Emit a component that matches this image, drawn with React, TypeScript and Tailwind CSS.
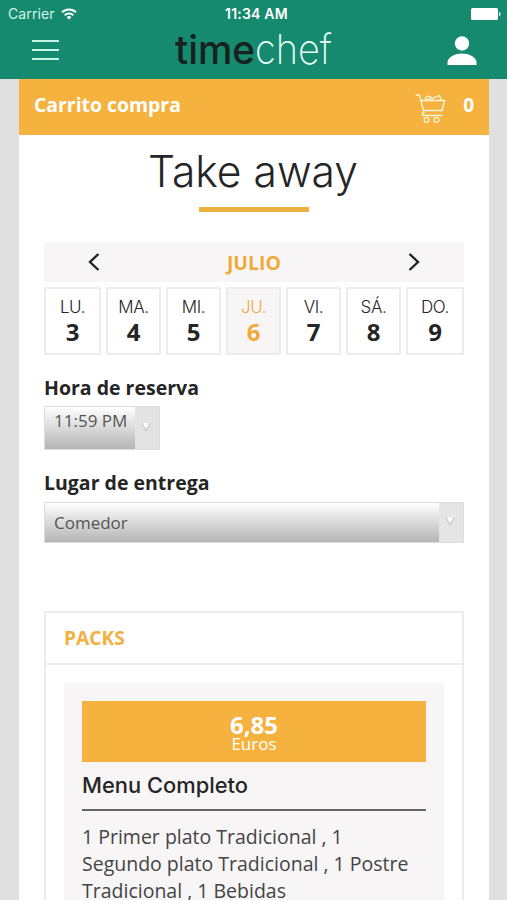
import clsx from "clsx";

const days = [
  { name: "LU.", date: 3 },
  { name: "MA.", date: 4 },
  { name: "MI.", date: 5 },
  { name: "JU.", date: 6, active: true },
  { name: "VI.", date: 7 },
  { name: "SÁ.", date: 8 },
  { name: "DO.", date: 9 },
];

function StatusBar() {
  return (
    <div className="grid h-[27px] grid-cols-3 items-center pl-2 pr-[6px] font-['Inter',sans-serif] text-[14px] leading-none text-white">
      <div className="flex items-center gap-[6px] text-[#d5f3e8]">
        <span className="tracking-[0.1px]">Carrier</span>
        <svg width="16" height="12" viewBox="0 0 16 12" fill="none" stroke="white" strokeWidth="2">
          <path d="M1 4.3a10 10 0 0 1 14 0" />
          <path d="M3.7 7.2a6.2 6.2 0 0 1 8.6 0" />
          <path d="M8 11.6 5.6 9.2a3.4 3.4 0 0 1 4.8 0z" fill="white" stroke="none" />
        </svg>
      </div>
      <span className="whitespace-nowrap pl-[4px] text-center text-[14px] font-semibold tracking-[0.2px]">11:34 AM</span>
      <svg className="justify-self-end" width="30" height="12" viewBox="0 0 30 12" fill="white">
        <rect width="27" height="12" rx="1.5" />
        <path d="M28 4c2 .6 2 3.400 0 4z" />
      </svg>
    </div>
  );
}

function Header() {
  return (
    <header className="h-[79px] bg-[#158a6e]">
      <StatusBar />
      <div className="flex h-[52px] items-start justify-between pl-8 pr-[30px]">
        <button className="mt-[13px] flex w-[27px] flex-col gap-[7px]" aria-label="Menu">
          <span className="h-[2px] bg-[#c8f5e6]" />
          <span className="h-[2px] bg-[#c8f5e6]" />
          <span className="h-[2px] bg-[#c8f5e6]" />
        </button>
        <svg className="ml-[4px]" width="160" height="52" viewBox="0 0 160 52" fontFamily="Inter, sans-serif" fontSize="39">
          <text x="0" y="37" fill="#17211f" fontWeight="500" textLength="80" lengthAdjust="spacingAndGlyphs">time</text>
          <text x="80" y="37" fill="#e9fff8" fontWeight="200" fontSize="41" textLength="77" lengthAdjust="spacingAndGlyphs">chef</text>
        </svg>
        <svg className="mt-[8px]" width="30" height="30" viewBox="0 0 30 30" fill="white">
          <circle cx="15" cy="8.500" r="7.200" />
          <path d="M.5 30v-3.500C2 21.500 8 18.500 15 18.500s13 3 14.500 8V30z" />
        </svg>
      </div>
    </header>
  );
}

function CartIcon() {
  return (
    <svg width="32" height="32" viewBox="0 0 32 32" fill="none" stroke="#fff5dd" strokeWidth="1.300" strokeLinejoin="round" strokeLinecap="round">
      <path d="M1 2h3.500L9 19.500c-3 .5-2.500 3 0 3h18" />
      <path d="M6.500 7.500H29.500L27 17.500H8.500" />
      <path d="M10.500 7V4.500l3-1.500 3 1.500L12 7M16.500 6.500l2.500-2 5.500-2L26 7" />
      <circle cx="11.500" cy="27" r="2.400" />
      <circle cx="21.500" cy="27" r="2.400" />
    </svg>
  );
}

function Arrow() {
  return (
    <svg width="10" height="10" viewBox="0 0 10 10">
      <path d="M.8 1 5 9 9.200 1" fill="#fafafa" stroke="#bbb" strokeWidth="1" />
    </svg>
  );
}

export default function App() {
  return (
    <div className="h-[900px] w-[507px] overflow-hidden bg-[#e0e0e0] font-['Open_Sans',sans-serif] text-[#252525]">
      <Header />

      <main className="ml-[19px] h-[821px] w-[470px] bg-white">
        <div className="flex h-14 items-center bg-[#f5b23f] px-[15px] text-white">
          <span className="-mt-1 text-[19.400px] font-bold">Carrito compra</span>
          <span className="ml-auto mr-[16px] mt-[3px]"><CartIcon /></span>
          <span className="-mt-1 text-[19px] font-bold">0</span>
        </div>

        <div className="px-[25px]">
          <h1 className="flex h-[72px] items-center justify-center font-['Inter',sans-serif] text-[43px] font-light">
            <svg width="212" height="60" viewBox="0 0 212 60">
              <text x="0" y="46" fill="#252525" textLength="210" lengthAdjust="spacingAndGlyphs">Take away</text>
            </svg>
          </h1>
          <div className="mx-auto h-[5px] w-[110px] bg-[#eeb03f]" />

          <div className="mt-[30px] flex h-10 items-center justify-between bg-[#f7f5f6] px-[44px]">
            <svg width="12" height="20" viewBox="0 0 12 20" fill="none" stroke="#222" strokeWidth="2.400">
              <path d="M10.500 2 2 10l8.500 8" />
            </svg>
            <span className="pt-px text-[19.500px] font-bold text-[#f2a93b]">JULIO</span>
            <svg width="12" height="20" viewBox="0 0 12 20" fill="none" stroke="#222" strokeWidth="2.400">
              <path d="M1.500 2 10 10l-8.500 8" />
            </svg>
          </div>

          <div className="mt-[5px] grid h-[68px] grid-cols-[57px_repeat(5,55px)_58px] gap-[5px]">
            {days.map((day) => (
              <div
                key={day.date}
                className={clsx(
                  "flex flex-col items-center border-2 border-[#ececec] pt-[8px]",
                  day.active ? "bg-[#f7f5f6] text-[#f2a93b]" : "bg-white",
                )}
              >
                <span className="font-['Inter',sans-serif] text-[17px] font-light leading-[21px] tracking-[-0.4px]">{day.name}</span>
                <span className="text-[24px] font-bold leading-[27px]">{day.date}</span>
              </div>
            ))}
          </div>

          <div className="mt-[18px] h-[33px] text-[19.500px] font-bold leading-[29px]">Hora de reserva</div>
          <div className="flex h-11 w-[116px] border border-[#ddd] text-[#555]">
            <div className="w-[90px] whitespace-nowrap bg-linear-to-b from-white to-[#b5b5b5] pl-[9px] text-[17px] leading-[27px]">11:59 PM</div>
            <div className="flex flex-1 items-center justify-center bg-[#e3e3e3] pr-[2px] pb-[2px]"><Arrow /></div>
          </div>

          <div className="mt-[18px] h-[34px] text-[19.500px] font-bold leading-[29px]">Lugar de entrega</div>
          <div className="flex h-[41px] border border-[#ddd] text-[#555]">
            <div className="w-[394px] bg-linear-to-b from-white to-[#b5b5b5] pl-[9px] text-[17px] leading-[39px]">Comedor</div>
            <div className="flex flex-1 items-center justify-center bg-[#e5e5e5] pr-[2px] pb-[4px]"><Arrow /></div>
          </div>

          <section className="mt-[68px] h-[300px] border-2 border-[#ececec]">
            <h2 className="flex h-[52px] items-center border-b-2 border-[#ececec] pl-[18px] text-[19.200px] font-bold text-[#f2b141]">PACKS</h2>
            <div className="mx-[18px] mt-[18px] h-[240px] bg-[#f7f5f6] px-[18px] pt-[18px]">
              <div className="flex h-[61px] flex-col items-center bg-[#f5b23f] pt-[12px] text-white">
                <span className="text-[24px] font-bold leading-[23px]">6,85</span>
                <span className="text-[17px] leading-[16px]">Euros</span>
              </div>
              <h3 className="h-[47px] font-['Inter',sans-serif] text-[22px] font-medium leading-[46px]">
                <svg className="block" width="170" height="46" viewBox="0 0 170 46">
                  <text x="0" y="31" fill="#252525" textLength="166" lengthAdjust="spacingAndGlyphs">Menu Completo</text>
                </svg>
              </h3>
              <div className="h-[2px] bg-[#666]" />
              <p className="mt-[12px] whitespace-nowrap text-[19.500px] leading-[27px] text-[#444]">
                1 Primer plato Tradicional , 1<br />
                Segundo plato Tradicional , 1 Postre<br />
                Tradicional , 1 Bebidas
              </p>
            </div>
          </section>
        </div>
      </main>
    </div>
  );
}
